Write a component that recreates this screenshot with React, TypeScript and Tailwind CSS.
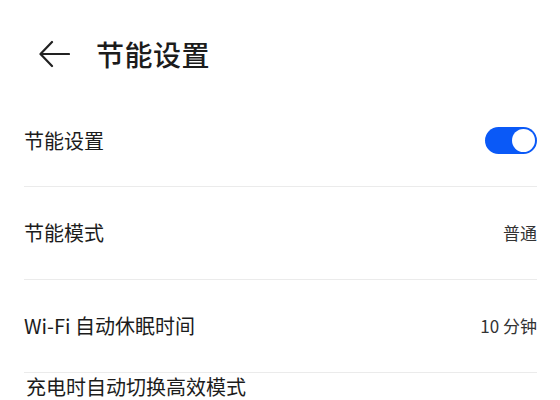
import React, { useState } from 'react';

const font = { fontFamily: '"Noto Sans CJK SC", "Noto Sans", sans-serif' };

function BackArrow() {
  return (
    <svg width="31" height="28" viewBox="0 0 31 28" fill="none" stroke="#222" strokeWidth="2.2" strokeLinecap="round" strokeLinejoin="round">
      <path d="M30 14H2" />
      <path d="M13 2L1.5 14L13 26" />
    </svg>
  );
}

function Toggle({ on, onChange }: { on: boolean; onChange: () => void }) {
  return (
    <button
      onClick={onChange}
      className={`w-[52px] h-[27px] rounded-full p-[2px] flex items-center ${on ? 'bg-[#0a59f7] justify-end' : 'bg-[#d9d9d9] justify-start'}`}
    >
      <span className="block w-[23px] h-[23px] rounded-full bg-white" />
    </button>
  );
}

export default function App() {
  const [enabled, setEnabled] = useState(true);

  return (
    <div className="w-[560px] h-[400px] bg-white overflow-hidden text-[#1c1c1c]" style={font}>
      <div className="h-[95px] pt-[13px] pl-[39px] flex items-center">
        <BackArrow />
        <h1 className="ml-[26px] text-[28px] font-medium leading-none tracking-[0.5px]">节能设置</h1>
      </div>

      <div className="pl-[24px] pr-[23px]">
        <div className="h-[92px] flex items-center justify-between border-b border-[#ebebeb]">
          <span className="text-[20px]">节能设置</span>
          <Toggle on={enabled} onChange={() => setEnabled(!enabled)} />
        </div>

        <div className="h-[93px] flex items-center justify-between border-b border-[#ebebeb]">
          <span className="text-[20px]">节能模式</span>
          <span className="text-[17px] text-[#333]">普通</span>
        </div>

        <div className="h-[93px] flex items-center justify-between border-b border-[#ebebeb]">
          <span className="text-[20px]">Wi-Fi 自动休眠时间</span>
          <span className="text-[17px] text-[#333]">10 分钟</span>
        </div>

        <div className="pt-[4px] pl-[2px]">
          <span className="block text-[20px] leading-none">充电时自动切换高效模式</span>
        </div>
      </div>
    </div>
  );
}
